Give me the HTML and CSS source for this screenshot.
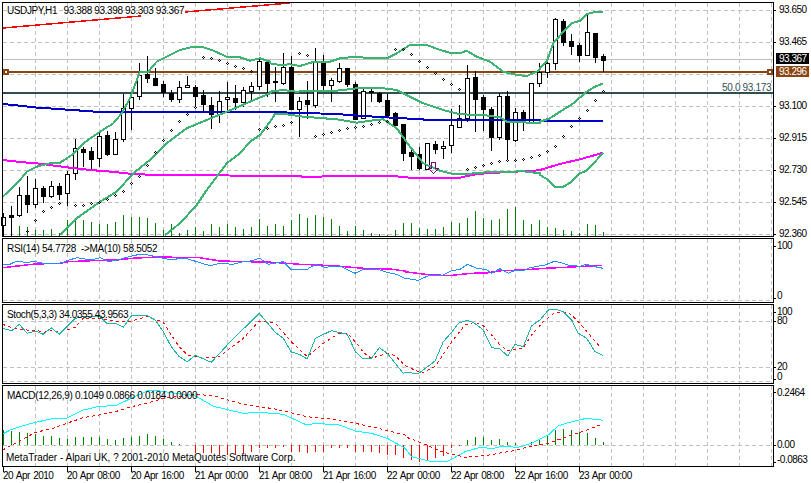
FILE: index.html
```html
<!DOCTYPE html>
<html lang="en">
<head>
    <meta charset="UTF-8">
    <meta name="viewport" content="width=device-width, initial-scale=1.0">
    <title>USDJPY,H1 - MetaTrader</title>
    <link rel="stylesheet" href="styles.css">
</head>
<body>
    <div class="chart">
        <svg class="pane pane-main" id="pane-main"></svg>
        <svg class="pane pane-rsi" id="pane-rsi"></svg>
        <svg class="pane pane-stoch" id="pane-stoch"></svg>
        <svg class="pane pane-macd" id="pane-macd"></svg>
        <div class="time-axis">
            <div class="time-label">20 Apr 2010</div>
            <div class="time-label">20 Apr 08:00</div>
            <div class="time-label">20 Apr 16:00</div>
            <div class="time-label">21 Apr 00:00</div>
            <div class="time-label">21 Apr 08:00</div>
            <div class="time-label">21 Apr 16:00</div>
            <div class="time-label">22 Apr 00:00</div>
            <div class="time-label">22 Apr 08:00</div>
            <div class="time-label">22 Apr 16:00</div>
            <div class="time-label">23 Apr 00:00</div>
        </div>
    </div>
    <script src="chart.js"></script>
</body>
</html>
```

FILE: styles.css
```css
body { margin: 0; background: #fff; font-family: "Liberation Sans", Arial, sans-serif; overflow: hidden; }
.chart { width: 811px; height: 483px; padding-top: 2px; box-sizing: border-box; display: flex; flex-direction: column; gap: 1px; }
.pane { display: block; width: 811px; flex: none; overflow: visible; }
.pane-main { height: 235px; }
.pane-rsi { height: 65px; }
.pane-stoch { height: 80px; }
.pane-macd { height: 82px; }
.time-axis { display: flex; padding-left: 3px; margin-top: -1px; }
.time-label { width: 64px; flex: none; font-size: 10px; line-height: 12px; letter-spacing: -0.5px; word-spacing: 1px; color: #000; white-space: nowrap; }
.time-label::before { content: ""; display: block; width: 1px; height: 5px; background: #000; margin-bottom: -2px; }
.time-label + .time-label { text-indent: -1px; }
.pane text { font-family: "Liberation Sans", Arial, sans-serif; font-size: 10px; letter-spacing: -0.5px; fill: #000; }
.pane text.tag { fill: #fff; }
.pane text.fibo { fill: #2f4f4f; }
.grid { stroke: #c0c0c0; stroke-width: 1; stroke-dasharray: 4 3; shape-rendering: crispEdges; fill: none; }
.frame { stroke: #000; stroke-width: 1; shape-rendering: crispEdges; fill: none; }
.bid { stroke: #c0c0c0; stroke-width: 1; shape-rendering: crispEdges; }
.hline-brown { stroke: #8b4513; stroke-width: 2; shape-rendering: crispEdges; }
.hline-fibo { stroke: #2f4f4f; stroke-width: 2; shape-rendering: crispEdges; }
.wick { stroke: #000; stroke-width: 1; shape-rendering: crispEdges; }
.body-up { fill: #fff; stroke: #000; stroke-width: 1; shape-rendering: crispEdges; }
.body-down { fill: #000; stroke: #000; stroke-width: 1; shape-rendering: crispEdges; }
.vol { stroke: #0a7a0a; stroke-width: 1; shape-rendering: crispEdges; }
.hist-up { stroke: #008000; stroke-width: 1; shape-rendering: crispEdges; }
.hist-down { stroke: #f00; stroke-width: 1; shape-rendering: crispEdges; }
.ind { fill: none; shape-rendering: crispEdges; stroke-linejoin: round; }
.trend { stroke: #f00; stroke-width: 1.5; }
.bands { stroke: #3cb371; stroke-width: 2; }
.ma-blue { stroke: #0000c8; stroke-width: 2; }
.ma-pink { stroke: #f0f; stroke-width: 2; }
.rsi-line { stroke: #1e90ff; stroke-width: 1; }
.rsi-ma { stroke: #f0f; stroke-width: 1.5; }
.stoch-line { stroke: #20b2aa; stroke-width: 1; }
.signal { stroke: #f00; stroke-width: 1; stroke-dasharray: 3 3; }
.macd-line { stroke: #0ff; stroke-width: 1; }
.sar { fill: #000; shape-rendering: crispEdges; }
.arrow { fill: none; stroke: #800080; stroke-width: 1; shape-rendering: crispEdges; }
.marker { fill: #fff; stroke: #8b4513; stroke-width: 2; shape-rendering: crispEdges; }
.tag-black { fill: #000; }
.tag-brown { fill: #8b4513; }
.mask { fill: #fff; }
```

FILE: chart.js
```js
// Bars are 8px apart, first one at x=3
function barX(i) { return 3 + 8 * i; }

// Readings were taken off a 3x crop, so convert back to page pixels
function toPage(list, ox, oy) {
    const out = [];
    for (let i = 0; i < list.length; i += 2) {
        out.push((list[i] / 3 + ox).toFixed(1) + ',' + (list[i + 1] / 3 + oy).toFixed(1));
    }
    return out;
}
function polyline(points, cls) {
    return `<polyline class="ind ${cls}" points="${points.join(' ')}"/>`;
}
function seg(x1, y1, x2, y2, cls) {
    return `<line class="${cls}" x1="${x1}" y1="${y1}" x2="${x2}" y2="${y2}"/>`;
}
function label(x, y, str, cls, len) {
    const attrs = (cls ? ` class="${cls}"` : '') + (len ? ` textLength="${len}"` : '');
    return `<text x="${x}" y="${y}"${attrs}>${str}</text>`;
}

function grid(top, bottom, rows) {
    let s = '';
    for (let k = 0; k < 24; k++) {
        const x = 35 + 32 * k + 0.5;
        s += seg(x, top + 1, x, bottom, 'grid');
    }
    rows.forEach(y => { s += seg(3, y + 0.5, 772, y + 0.5, 'grid'); });
    return s;
}
function frame(top, bottom) {
    return `<rect class="frame" x="2.5" y="${top + 0.5}" width="771" height="${bottom - top - 1}"/>`;
}
function tick(y) {
    return seg(774, y + 0.5, 776, y + 0.5, 'frame');
}
function mount(id, top, height, html) {
    const svg = document.getElementById(id);
    svg.setAttribute('viewBox', `0 ${top} 811 ${height}`);
    svg.innerHTML = html;
}

// [high, body top, body bottom, low, up?] in crop y units
const candles = [
    [640,650,675,710,1],[618,646,650,707,0],[562,586,644,650,1],[528,586,612,640,0],[538,565,611,624,1],
    [558,565,587,610,0],[544,559,587,594,1],[550,559,581,600,0],[512,523,580,618,1],[418,445,520,540,1],
    [440,447,455,500,0],[440,454,477,512,0],[395,409,475,500,1],[392,406,461,468,0],[396,418,461,464,1],
    [282,325,418,426,1],[282,292,325,390,1],[190,226,288,300,1],[168,222,233,248,0],[205,235,254,256,0],
    [242,253,277,290,0],[270,278,297,305,0],[243,260,298,308,1],[228,256,262,264,1],[255,262,287,318,0],
    [270,286,311,338,0],[290,316,341,388,0],[273,302,341,368,1],[246,292,298,330,1],[255,294,305,330,0],
    [262,271,305,322,1],[246,259,272,300,1],[172,184,257,270,1],[180,187,250,290,0],[200,243,247,305,0],
    [160,202,248,255,1],[168,202,326,326,0],[290,304,326,410,1],[243,300,312,357,0],[145,184,314,323,1],
    [165,186,254,275,0],[235,241,254,305,1],[190,205,242,250,1],[204,204,251,262,0],[247,252,357,360,0],
    [265,274,355,358,1],[264,273,277,305,0],[275,279,302,310,0],[283,300,345,345,0],[336,340,374,385,0],
    [372,372,458,482,0],[445,456,467,510,0],[440,462,504,510,0],[430,430,506,506,1],[422,432,446,462,0],
    [422,439,445,476,1],[327,376,436,458,1],[316,355,380,384,1],[196,235,355,365,1],[212,232,296,395,0],
    [285,292,326,392,0],[322,327,410,452,0],[280,289,410,420,1],[273,289,418,480,0],[323,337,419,426,1],
    [330,337,364,392,0],[250,250,367,368,1],[190,215,250,262,1],[180,190,215,235,1],[55,58,190,210,1],
    [56,63,126,138,0],[102,123,138,165,0],[128,135,164,186,0],[42,97,164,165,1],[98,100,170,188,0],
    [162,169,179,215,0]
];

const volumeTops = [680,690,678,682,690,690,686,700,660,658,660,665,672,672,665,645,652,652,655,670,690,672,700,690,680,692,672,682,672,680,688,680,656,678,
    672,678,660,642,655,645,650,657,678,693,678,690,700,702,705,690,670,670,684,688,686,682,666,670,655,633,654,660,658,627,620,660,672,660,
    682,684,690,694,698,672,676,697];

const upperBand = [].concat(
    toPage([8,590,30,570,60,540,80,515,110,500,150,490,180,488,215,465,250,430,300,395,340,370,365,340,390,295,420,215,445,215,470,185,500,170,540,150,580,140,610,142,640,152,680,170,720,172,750,182,780,175,810,185], 0, 0),
    toPage([0,190,30,195,60,193,90,198,130,186,180,185,210,175,260,170,300,175,350,175,380,160,420,135,470,135,510,150,540,158,575,158,590,152,620,170,660,185,700,215,740,225,770,228,800,215,810,208], 270, 0),
    toPage([0,205,20,185,40,130,70,95,95,70,120,62,140,42,170,35,190,36], 540, 0));
const midBand = [].concat(
    toPage([180,705,230,655,300,605,350,575,400,520,450,480,500,430,560,385,620,360,680,335,750,305,810,280], 0, 0),
    toPage([0,275,40,270,80,275,120,272,200,272,260,265,340,265,380,270,420,290,460,310,520,330,570,343,640,345,690,352,710,365,780,368,810,370], 270, 0),
    toPage([0,365,30,355,60,335,100,310,140,275,165,260,190,250], 540, 0));
const lowerBand = [].concat(
    toPage([495,705,540,670,590,615,620,570,650,530,680,490,720,460,750,425,780,405,810,365], 0, 0),
    toPage([0,365,15,342,50,343,100,350,200,358,260,368,300,362,340,358,380,385,420,440,460,490,510,512,550,522,590,522,650,517,760,514,810,520], 270, 0),
    toPage([0,525,25,540,45,560,70,560,95,545,120,520,140,512,165,485,190,458], 540, 0));
const blueMa = [].concat(
    toPage([8,312,50,316,100,322,160,326,230,331,300,336,810,336], 0, 0),
    toPage([0,336,200,342,250,346,330,351,400,355,470,359,810,361], 270, 0),
    toPage([0,362,190,362], 540, 0));
const pinkMa = [].concat(
    toPage([8,480,60,486,120,491,200,502,270,510,320,514,400,522,470,525,620,524,730,528,810,528], 0, 0),
    toPage([0,528,130,530,230,528,280,527,370,528,430,534,570,533,620,522,700,517,810,511], 270, 0),
    toPage([0,510,60,492,120,478,190,458], 540, 0));

const sarDots = [].concat(
    toPage([82,693,106,661,130,634,154,622,178,610,226,616,250,616,274,610,298,606,322,598,346,586,370,574,394,550,418,528,442,496,466,457,490,421,514,391,538,364,562,343,586,322,610,170,634,173,658,181,682,190,706,199,730,205,754,212,778,388,802,385], 0, 0),
    toPage([16,379,40,376,64,367,88,160,112,166,136,409,160,403,184,397,208,391,232,385,256,382,280,379,304,373,328,367,352,364,376,146,400,148,424,163,448,184,472,202,496,220,520,238,544,253,568,268,592,508,616,502,640,496,664,490,688,484,712,479,736,479,760,478,784,472,808,466], 270, 0),
    toPage([22,454,46,439,70,409,94,379,118,355,142,331,166,301,190,274], 540, 0));

function drawMain() {
    let s = grid(2, 236, [10, 42, 74, 106, 138, 170, 202, 234]);
    s += seg(3, 59.5, 773, 59.5, 'bid');
    s += seg(3, 72, 773, 72, 'hline-brown');
    s += seg(3, 93, 773, 93, 'hline-fibo');

    volumeTops.forEach((top, i) => {
        s += seg(barX(i) + 0.5, Math.round(top / 3), barX(i) + 0.5, 236, 'vol');
    });
    candles.forEach((c, i) => {
        const x = barX(i);
        const hi = Math.round(c[0] / 3), top = Math.round(c[1] / 3), bot = Math.round(c[2] / 3), lo = Math.round(c[3] / 3);
        s += seg(x + 0.5, hi, x + 0.5, lo, 'wick');
        s += `<rect class="${c[4] ? 'body-up' : 'body-down'}" x="${x - 1.5}" y="${top + 0.5}" width="4" height="${Math.max(bot - top, 1)}"/>`;
    });

    s += polyline(blueMa, 'ma-blue') + polyline(pinkMa, 'ma-pink');
    s += polyline(upperBand, 'bands') + polyline(midBand, 'bands') + polyline(lowerBand, 'bands');
    s += polyline(['3,28', '141,16'], 'trend') + polyline(['185,12', '290,3'], 'trend');

    sarDots.forEach(p => {
        const [x, y] = p.split(',').map(v => Math.round(v));
        s += `<path class="sar" d="M${x} ${y - 1}h1v1h-1zM${x - 1} ${y}h1v1h-1zM${x + 1} ${y}h1v1h-1zM${x} ${y + 1}h1v1h-1z"/>`;
    });
    s += '<polygon class="arrow" points="431.5,162.5 435.5,162.5 435.5,168.5 438.5,168.5 433.5,173.5 428.5,168.5 431.5,168.5"/>';

    // ends of the horizontal line
    s += '<rect class="marker" x="4" y="70" width="4" height="4"/><rect class="marker" x="768" y="70" width="4" height="4"/>';

    s += '<rect class="mask" x="721" y="83" width="51" height="9"/>';
    s += label(722, 91, '50.0 93.173', 'fibo', 49);
    s += label(7, 14, 'USDJPY,H1', null, 50);
    s += label(63.5, 14, '93.388 93.398 93.303 93.367', null, 120.5);
    s += frame(2, 237);

    const prices = ['93.650', '93.465', null, '93.100', '92.915', '92.730', '92.545', '92.360'];
    prices.forEach((p, k) => {
        const y = 10 + 32 * k;
        if (!p) return;
        s += tick(y) + label(779, y + 3, p);
    });
    s += '<rect class="tag-black" x="776" y="53" width="33" height="11"/>' + label(779, 62, '93.367', 'tag');
    s += '<rect class="tag-brown" x="776" y="66" width="33" height="11"/>' + label(779, 75, '93.296', 'tag');
    mount('pane-main', 2, 235, s);
}

function drawRsi() {
    let s = grid(238, 302, [300]);
    s += polyline([].concat(
        toPage([8,98,60,92,105,87,180,85,205,80,300,76,350,75,395,70,470,66,600,68,660,78,820,82,900,88,1000,92,1090,100,1170,102,1215,108], 0, 235),
        toPage([0,110,60,118,130,122,200,115,245,114,290,107,350,105,420,100,500,96,590,91], 405, 235)), 'rsi-ma');
    s += polyline([].concat(
        toPage([8,90,30,88,50,78,75,82,105,80,130,85,155,85,180,85,205,76,230,68,255,72,275,75,300,68,325,80,350,75,370,70,395,63,420,58,445,60,470,65,490,70,515,75,540,70,565,72,590,80,630,92,660,85,700,88,730,80,750,78,780,70,805,88,850,80,875,105,920,104,945,88,975,97,1020,93,1065,115,1090,103,1140,105,1165,113,1190,118,1215,130], 0, 235),
        toPage([0,130,40,136,70,122,110,122,140,107,165,103,188,88,215,100,245,104,260,115,285,101,310,115,330,106,355,108,375,98,420,90,450,78,490,90,525,94,545,88,570,95,594,100], 405, 235)), 'rsi-line');
    s += label(7, 252, 'RSI(14) 54.7728 &#160;-&gt;MA(10) 58.5052', null, 150);
    s += frame(238, 303);
    s += tick(246) + label(777, 249, '100') + tick(298) + label(777, 299, '0');
    mount('pane-rsi', 238, 65, s);
}

function drawStoch() {
    let s = grid(304, 383, [321, 367, 381]);
    s += polyline([].concat(
        toPage([8,268,35,278,58,282,82,285,106,285,130,292,154,287,178,292,226,277,250,250,298,250,346,258,394,258,442,245,490,262,514,300,538,335,562,360,610,370,658,365,730,310,778,258,826,265,874,320,922,365,970,325,1018,295,1042,295,1066,320,1090,352,1114,370,1162,355,1186,362,1215,392], 0, 235),
        toPage([0,392,50,414,90,395,140,320,180,270,210,262,235,272,260,300,285,330,310,348,355,338,380,300,420,255,450,233,490,232,520,260,550,295,585,335], 405, 235)), 'signal');
    s += polyline([].concat(
        toPage([8,280,35,287,58,268,82,295,106,288,130,298,154,278,178,298,226,250,250,245,298,243,322,267,346,265,370,277,394,243,442,242,466,255,490,290,514,335,538,365,562,380,586,361,634,382,682,330,730,282,778,235,826,292,850,310,874,351,898,358,922,372,946,310,994,287,1042,298,1066,350,1090,372,1114,370,1138,338,1162,355,1186,385,1210,415], 0, 235),
        toPage([0,412,40,416,90,378,115,320,140,292,160,265,185,256,205,262,235,285,260,338,285,342,308,363,330,328,355,335,380,272,405,255,430,225,450,222,475,230,500,255,520,295,545,310,570,350,594,361], 405, 235)), 'stoch-line');
    s += label(7, 318, 'Stoch(5,3,3) 34.0355 43.9563', null, 121);
    s += frame(304, 384);
    s += tick(312) + label(777, 315, '100') + tick(321) + label(777, 324, '80');
    s += tick(367) + label(777, 370, '20') + tick(379) + label(777, 380, '0');
    mount('pane-stoch', 304, 80, s);
}

function drawMacd() {
    let s = grid(385, 467, [445]);
    const greens = [585,588,592,595,598,602,604,610,612,606,606,606,606,612,614,610,606,604,598,602,612,622,628,630];
    const reds = [655,655,655,660,660,660,655,650,640,640,638,635,650,650,655,650,650,640,640,640,652,652,652,655,660,660,670,
        675,682,675,670,662,640,632];
    const greens2 = [614,605,605,615,612,622,624,630,622,612,600,585,582,585,592,594,608,620];
    greens.forEach((top, i) => { s += seg(barX(i) + 0.5, Math.round(235 + top / 3), barX(i) + 0.5, 445, 'hist-up'); });
    reds.forEach((end, i) => { s += seg(barX(i + 24) + 0.5, 445, barX(i + 24) + 0.5, Math.round(235 + end / 3), 'hist-down'); });
    greens2.forEach((top, i) => { s += seg(barX(i + 58) + 0.5, Math.round(235 + top / 3), barX(i + 58) + 0.5, 445, 'hist-up'); });

    s += polyline([].concat(
        toPage([8,597,35,583,60,575,106,562,154,552,200,550,250,525,298,514,346,512,394,490,442,468,466,466,514,473,586,482,640,514,730,535,778,532,850,538,920,570,946,565,1018,570,1066,588,1114,595,1162,610,1215,640], 0, 235),
        toPage([0,640,20,665,80,680,130,678,180,650,230,636,260,642,290,634,340,637,380,625,430,600,460,572,500,560,545,550,594,556], 405, 235)), 'macd-line');
    s += polyline([].concat(
        toPage([8,645,35,630,60,618,106,592,154,582,200,565,250,548,298,540,346,530,394,515,442,505,490,490,586,478,640,482,730,508,826,522,922,545,1018,555,1114,575,1215,600], 0, 235),
        toPage([0,605,60,628,110,650,180,667,240,662,320,648,375,635,430,625,500,600,545,585,585,570], 405, 235)), 'signal');
    s += label(7, 399, 'MACD(12,26,9) 0.1049 0.0866 0.0184 0.0000', null, 190);
    s += label(6, 461, 'MetaTrader - Alpari UK, ? 2001-2010 MetaQuotes Software Corp.', null, 289);
    s += frame(385, 467);
    s += tick(392) + label(777, 396, '0.2464') + tick(445) + label(777, 448, '0.00') + tick(462) + label(777, 463, '-0.0863');
    mount('pane-macd', 385, 82, s);
}

drawMain();
drawRsi();
drawStoch();
drawMacd();
```
